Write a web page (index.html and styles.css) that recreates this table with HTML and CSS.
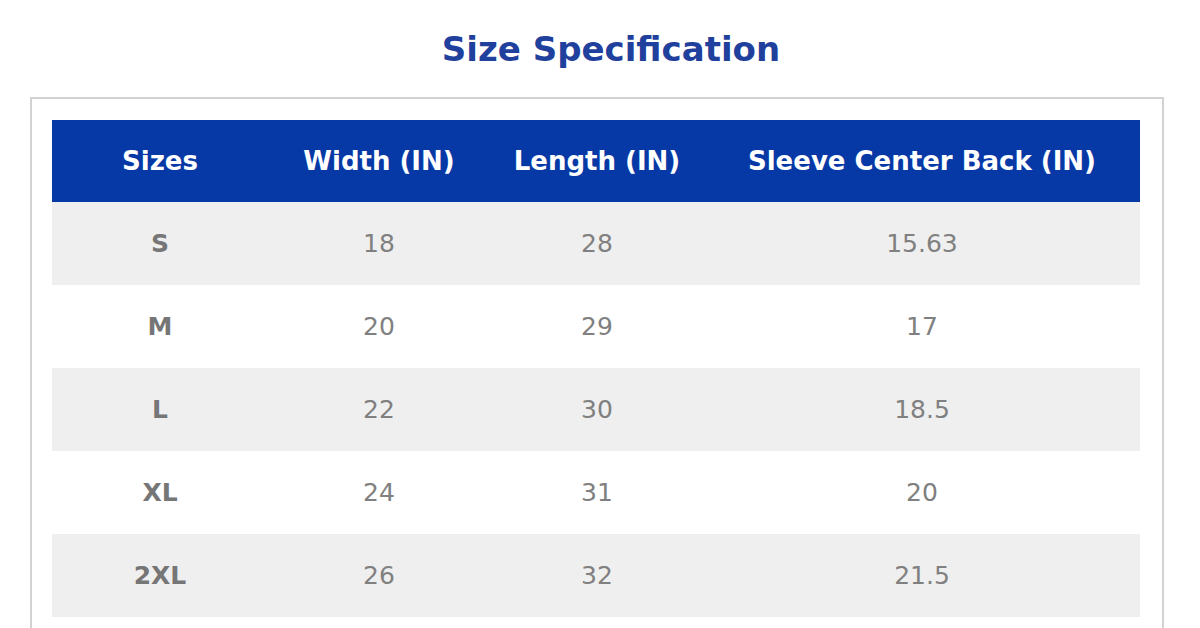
FILE: index.html
```html
<!DOCTYPE html>
<html>
<head>
<meta charset="utf-8">
<link rel="stylesheet" href="styles.css">
</head>
<body>
<h1 class="title">Size Specification</h1>
<div class="panel">
  <table class="spec">
    <colgroup>
      <col class="c1"><col class="c2"><col class="c3"><col class="c4">
    </colgroup>
    <thead>
      <tr><th>Sizes</th><th>Width (IN)</th><th>Length (IN)</th><th>Sleeve Center Back (IN)</th></tr>
    </thead>
    <tbody>
      <tr class="alt"><td class="size">S</td><td>18</td><td>28</td><td>15.63</td></tr>
      <tr><td class="size">M</td><td>20</td><td>29</td><td>17</td></tr>
      <tr class="alt"><td class="size">L</td><td>22</td><td>30</td><td>18.5</td></tr>
      <tr><td class="size">XL</td><td>24</td><td>31</td><td>20</td></tr>
      <tr class="alt"><td class="size">2XL</td><td>26</td><td>32</td><td>21.5</td></tr>
    </tbody>
  </table>
</div>
</body>
</html>
```
FILE: styles.css
```css
html, body {
  margin: 0;
  padding: 0;
  background: #fff;
  overflow: hidden;
}
body {
  font-family: "DejaVu Sans", "Open Sans", sans-serif;
}
.title {
  margin: 0;
  height: 97px;
  box-sizing: border-box;
  padding: 27px 0 0 22px;
  text-align: center;
  font-family: "DejaVu Sans", sans-serif;
  font-weight: 700;
  font-size: 34px;
  line-height: 44px;
  color: #1f409c;
}
.panel {
  margin: 0 36px 0 30px;
  border: 2px solid #d2d2d2;
  padding: 21px 22px 40px 20px;
}
.spec {
  width: 100%;
  border-collapse: collapse;
  table-layout: fixed;
}
.c1 { width: 216px; }
.c2 { width: 222px; }
.c3 { width: 214px; }
.spec th {
  background: #0639a6;
  color: #fff;
  height: 82px;
  padding: 0;
  font-weight: 700;
  font-size: 26px;
  text-align: center;
}
.spec td {
  height: 83px;
  padding: 0;
  text-align: center;
  color: #808080;
  font-size: 25px;
  font-weight: 400;
}
.spec td.size {
  font-weight: 700;
  color: #767676;
}
.spec tr.alt td {
  background: #efefef;
}
```
